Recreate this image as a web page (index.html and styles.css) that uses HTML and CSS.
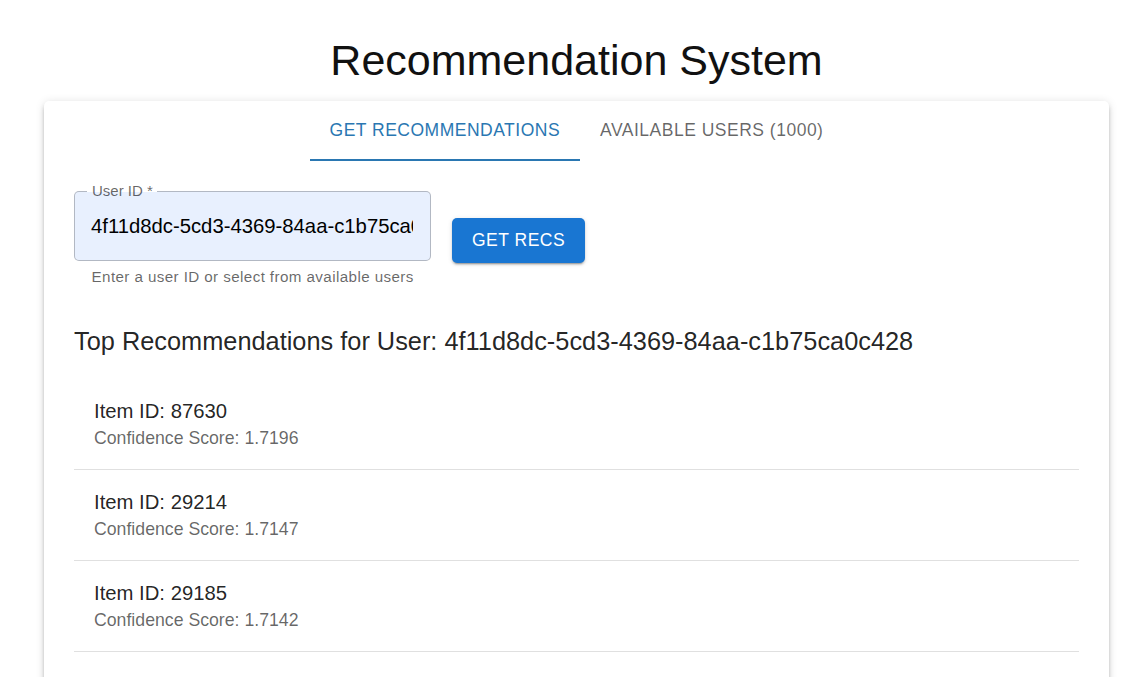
FILE: index.html
```html
<!DOCTYPE html>
<html lang="en">
<head>
<meta charset="utf-8">
<title>Recommendation System</title>
<link rel="stylesheet" href="styles.css">
</head>
<body>
<div class="page">
  <h1 class="title">Recommendation System</h1>
  <div class="card">
    <div class="tabs">
      <div class="tab tab-active">GET RECOMMENDATIONS</div>
      <div class="tab">AVAILABLE USERS (1000)</div>
    </div>
    <div class="panel">
      <div class="form-row">
        <div class="field">
          <div class="outline">
            <span class="label">User ID *</span>
            <div class="input">4f11d8dc-5cd3-4369-84aa-c1b75ca0c428</div>
          </div>
          <div class="helper">Enter a user ID or select from available users</div>
        </div>
        <button class="btn">GET RECS</button>
      </div>
      <h2 class="subtitle">Top Recommendations for User: 4f11d8dc-5cd3-4369-84aa-c1b75ca0c428</h2>
      <ul class="list">
        <li class="item"><div class="primary">Item ID: 87630</div><div class="secondary">Confidence Score: 1.7196</div></li>
        <li class="item"><div class="primary">Item ID: 29214</div><div class="secondary">Confidence Score: 1.7147</div></li>
        <li class="item"><div class="primary">Item ID: 29185</div><div class="secondary">Confidence Score: 1.7142</div></li>
        <li class="item"><div class="primary">Item ID: 29188</div><div class="secondary">Confidence Score: 1.7139</div></li>
        <li class="item"><div class="primary">Item ID: 45321</div><div class="secondary">Confidence Score: 1.7101</div></li>
      </ul>
    </div>
  </div>
</div>
</body>
</html>
```
FILE: styles.css
```css
html, body {
  margin: 0;
  padding: 0;
  background: #ffffff;
  font-family: "Liberation Sans", Arial, sans-serif;
  color: rgba(0, 0, 0, 0.87);
}

.page {
  padding: 34px 0 40px 44px;
  width: 1065px;
}

.title {
  margin: 0 0 14px 0;
  font-size: 43px;
  line-height: 52.5px;
  font-weight: 400;
  text-align: center;
  color: #111;
}

.card {
  background: #fff;
  border-radius: 5px;
  box-shadow: 0 4px 4px -2px rgba(0,0,0,0.2), 0 4px 5px 0 rgba(0,0,0,0.14), 0 1px 10px 0 rgba(0,0,0,0.12);
}

.tabs {
  display: flex;
  justify-content: center;
}

.tab {
  height: 60px;
  box-sizing: border-box;
  padding: 2px 20px 0 20px;
  display: flex;
  align-items: center;
  font-size: 17.5px;
  letter-spacing: 0.5px;
  color: rgba(0, 0, 0, 0.6);
  border-bottom: 2.5px solid transparent;
}

.tab-active {
  color: #2a77b2;
  border-bottom-color: #2a77b2;
}

.panel {
  padding: 30px 30px 0 30px;
}

.form-row {
  display: flex;
  align-items: center;
  gap: 21px;
}

.field {
  width: 357px;
}

.outline {
  position: relative;
  height: 70px;
  box-sizing: border-box;
  border: 1.25px solid rgba(0, 0, 0, 0.23);
  border-radius: 5px;
  background: #e8f0fe;
  display: flex;
  align-items: center;
  padding: 0 17px 0 16px;
}

.label {
  position: absolute;
  left: 12px;
  top: -10px;
  padding: 0 4px 0 5px;
  font-size: 15px;
  line-height: 18px;
  color: rgba(0, 0, 0, 0.6);
  background: linear-gradient(#fff 0, #fff 55%, transparent 55%);
}

.input {
  font-size: 20.3px;
  white-space: nowrap;
  overflow: hidden;
  width: 100%;
  color: #000;
  padding-top: 1px;
}

.helper {
  margin: 3px 0 0 17.5px;
  font-size: 15.2px;
  line-height: 25px;
  letter-spacing: 0.4px;
  white-space: nowrap;
  color: rgba(0, 0, 0, 0.6);
}

.btn {
  height: 45.5px;
  padding: 0 20px;
  margin-top: 2px;
  border: none;
  border-radius: 5px;
  background: #1976d2;
  color: #fff;
  font-family: "Liberation Sans", Arial, sans-serif;
  font-size: 17.5px;
  letter-spacing: 0.5px;
  box-shadow: 0 3px 1px -2px rgba(0,0,0,0.2), 0 2px 2px 0 rgba(0,0,0,0.14), 0 1px 5px 0 rgba(0,0,0,0.12);
}

.subtitle {
  margin: 32px 0 9px 0;
  font-size: 25.35px;
  line-height: 40px;
  font-weight: 400;
  color: rgba(0, 0, 0, 0.87);
}

.list {
  list-style: none;
  margin: 0;
  padding: 9px 0 0 0;
}

.item {
  padding: 17.5px 20px;
  border-bottom: 1.25px solid rgba(0, 0, 0, 0.12);
}

.primary {
  font-size: 20.3px;
  line-height: 30px;
  color: rgba(0, 0, 0, 0.87);
}

.secondary {
  font-size: 17.7px;
  line-height: 25px;
  color: rgba(0, 0, 0, 0.6);
}
```
